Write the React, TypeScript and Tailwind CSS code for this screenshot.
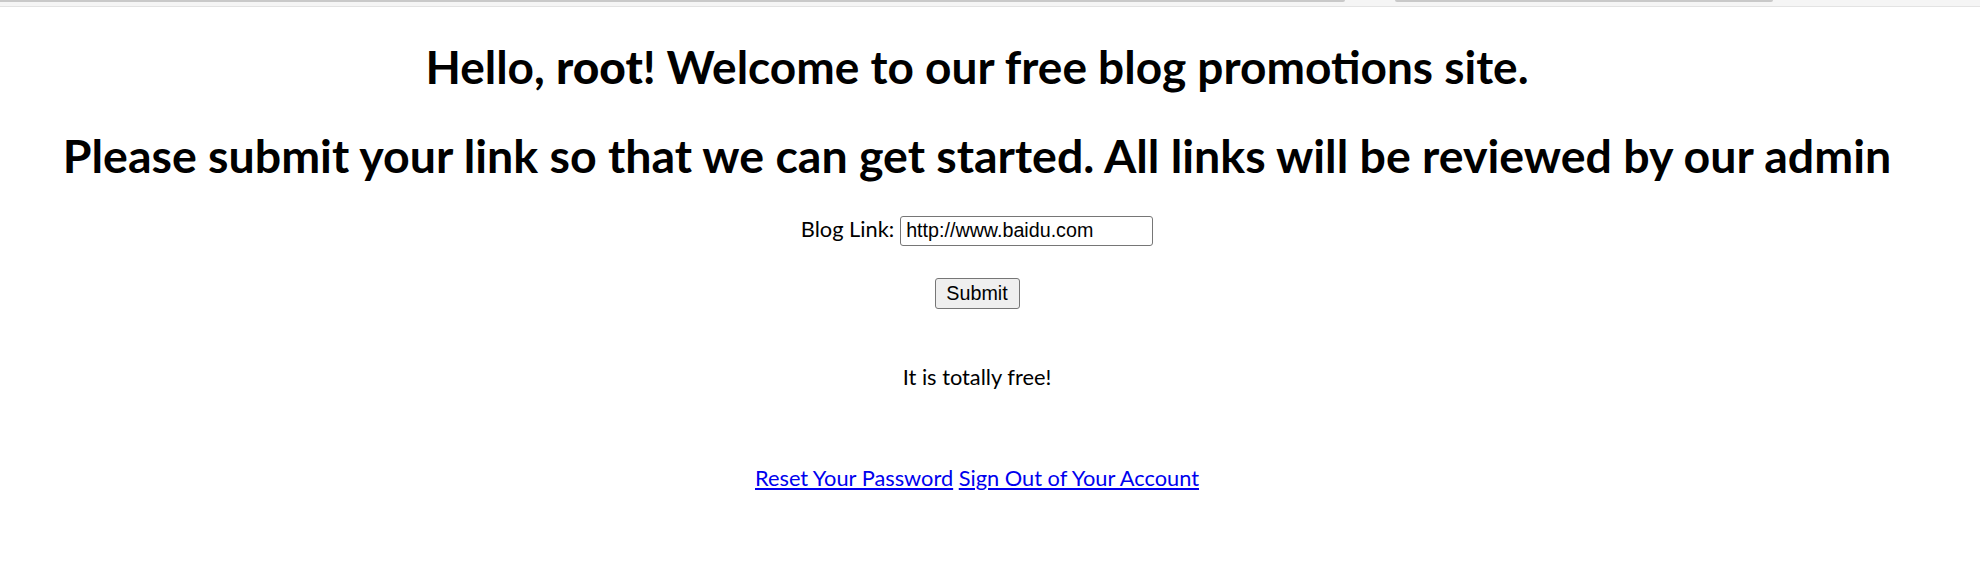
import React from "react";

const H2 = "Please submit your link so that we can get started. All links will be reviewed by our admin";

export default function App() {
  return (
    <div className="relative min-h-[570px] bg-white text-black font-['Lato',sans-serif]">
      <div className="relative h-[7px] bg-[#f5f5f5] border-b border-[#e3e3e3]">
        <div className="absolute left-0 top-0 h-[2px] w-[1345px] rounded-br-[2px] bg-[#c9c9c9]" />
        <div className="absolute left-[1395px] top-0 h-[2px] w-[378px] rounded-b-[2px] bg-[#c9c9c9]" />
      </div>
      <div className="pr-[26px] text-center">
        <h1 className="mt-[35px] text-[46px] leading-[50px] font-bold">
          Hello, <b>root</b>! Welcome to our free blog promotions site.
        </h1>
        <h2 className="mt-[38px] text-[46.5px] leading-[50px] font-bold">{H2}</h2>
        <form className="mt-[33px] flex items-baseline justify-center gap-[6px] text-[21.8px]">
          <label>Blog Link:</label>
          <input
            defaultValue="http://www.baidu.com"
            className="h-[30px] w-[253px] rounded-[3px] border border-[#767676] px-[5px] font-['Liberation_Sans',Arial,sans-serif] text-[19.7px] text-black"
          />
        </form>
        <div className="mt-[32px] flex justify-center">
          <button className="h-[31px] w-[85px] rounded-[3px] border border-[#767676] bg-[#efefef] font-['Liberation_Sans',Arial,sans-serif] text-[19.7px] text-black">
            Submit
          </button>
        </div>
        <p className="mt-[53px] text-[21.8px] leading-[30px]">It is totally free!</p>
        <p className="mt-[71px] text-[21.8px] leading-[30px]">
          <a href="#" className="text-[#0000ee] underline">Reset Your Password</a>{" "}
          <a href="#" className="text-[#0000ee] underline">Sign Out of Your Account</a>
        </p>
      </div>
    </div>
  );
}
